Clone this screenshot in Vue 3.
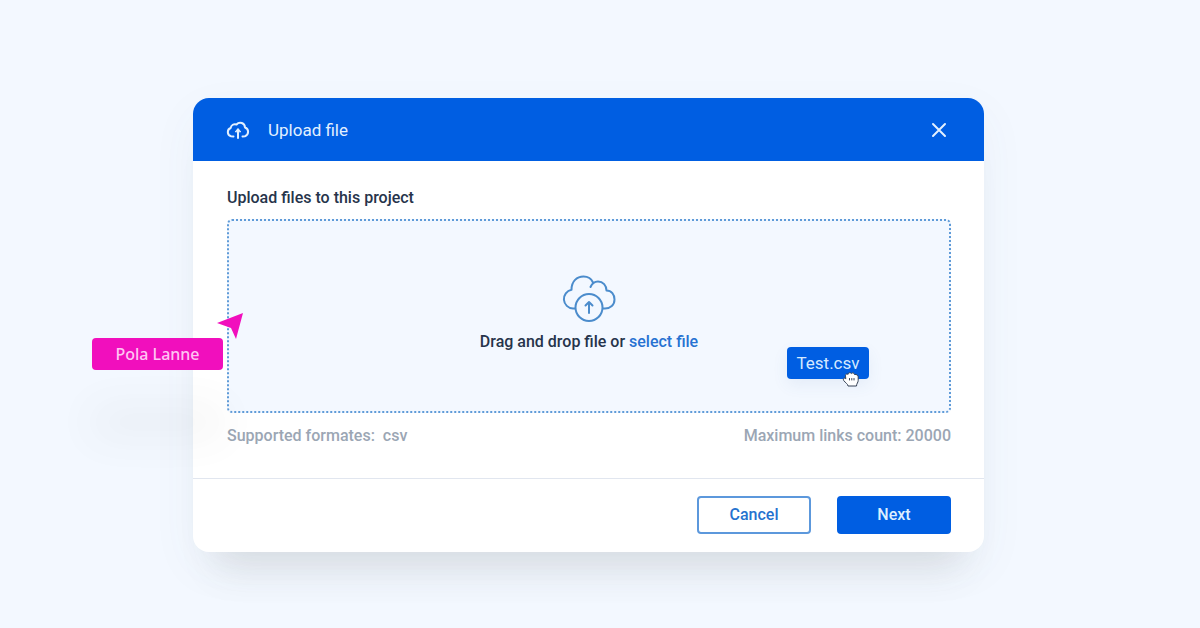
<script setup>
import { ref } from 'vue'

const fileInput = ref(null)
const openPicker = () => fileInput.value?.click()
</script>

<template>
  <main class="page">
    <section class="modal" role="dialog" aria-labelledby="modal-title">
      <header class="modal-header">
        <svg class="header-icon" viewBox="0 0 24 18" aria-hidden="true">
          <path d="M7.500 15.500L5 15.200A4.300 4.300 0 0 1 4.700 7C5 4 8 2.500 10.500 3.500C13.500 0 18.800 2 19 6.500A4.600 4.600 0 0 1 19 15.200L16.500 15.500" />
          <path d="M12 17V9" />
          <path class="arrow-head" d="M9.500 10.500L12 7.500L14.500 10.500Z" />
        </svg>
        <h1 id="modal-title">Upload file</h1>
        <button class="close" type="button" aria-label="Close">
          <svg viewBox="0 0 16 16" aria-hidden="true"><path d="M2 2L14 14M14 2L2 14" /></svg>
        </button>
      </header>

      <div class="modal-body">
        <h2>Upload files to this project</h2>
        <div class="dropzone">
          <svg class="cloud" viewBox="0 0 54 48" aria-hidden="true">
            <path d="M13 33.500H11A9.500 9.500 0 0 1 9.500 14.700C9.500 6 15 1.500 21.500 1.500C26.500 1.500 29.500 4 31 7.500" />
            <path d="M28.500 12C30 8.500 33 6.500 36 6.500C41 6.500 44.500 10.500 44.500 15.500C49.500 15.500 52.500 19.500 52.500 24.500C52.500 30 48.500 33.500 43 33.500H41" />
            <circle cx="27" cy="32.500" r="13.500" />
            <path d="M27 38V27M23.500 30.500L27 27L30.500 30.500" />
          </svg>
          <p>Drag and drop file or <a href="#" @click.prevent="openPicker">select file</a></p>
          <input ref="fileInput" type="file" accept=".csv" aria-label="Select file" hidden />
          <div class="dragged-file">
            Test.csv
            <svg class="hand" viewBox="0 0 18 17" aria-hidden="true">
              <path d="M3.500 5.500C3 3 5 2.500 6 3.500C6 1.500 8.500 1.200 9.300 2.500C10.300 1.300 12.200 1.800 12.500 3.500C14.500 3 16.500 4.500 16.200 6V9.500C16.200 11.500 14.500 12.500 14.500 15H6C6 13 3.500 12 1.700 9.500C0.700 7.500 2 6.500 3.500 7.500Z" />
              <path class="knuckles" d="M7.500 7.500V9M9.800 7.500V9M12 7.500V9" />
            </svg>
          </div>
        </div>
        <div class="hints">
          <span>Supported formates:&nbsp; csv</span>
          <span>Maximum links count: 20000</span>
        </div>
      </div>

      <footer class="modal-footer">
        <button class="btn outline" type="button">Cancel</button>
        <button class="btn" type="button">Next</button>
      </footer>

      <div class="collaborator">
        <span>Pola Lanne</span>
        <svg viewBox="0 0 28 28" aria-hidden="true"><path d="M27 1L20 27L15 16L1 11Z" /></svg>
      </div>
    </section>
  </main>
</template>

<style>
body {
  background: #f3f8ff;
}
</style>

<style scoped>
.page {
  box-sizing: border-box;
  min-height: 100vh;
  padding: 98px 216px 76px 193px;
  background: #f3f8ff;
  color: #26344b;
  font: 500 16px/20px Roboto, "Liberation Sans", sans-serif;
}

.modal {
  position: relative;
  border-radius: 16px;
  background: #fff;
  box-shadow:
    0 40px 36px -24px rgba(80, 80, 70, 0.13),
    0 16px 48px rgba(80, 90, 120, 0.05);
}

.modal-header {
  display: flex;
  align-items: center;
  height: 63px;
  padding: 0 37px 0 33px;
  border-radius: 16px 16px 0 0;
  background: #005ee2;
  color: #e2f0ff;
}

svg {
  display: block;
  fill: none;
  stroke: currentColor;
  stroke-linecap: round;
  stroke-linejoin: round;
}

.header-icon {
  width: 24px;
  height: 18px;
  margin-right: 18px;
  stroke-width: 2;
}

.arrow-head {
  fill: currentColor;
  stroke-width: 1;
}

h1,
h2,
p {
  margin: 0;
  font: inherit;
}

h1 {
  flex: 1;
  font-size: 17px;
  font-weight: 400;
}

.close {
  padding: 0;
  border: 0;
  background: none;
  color: inherit;
  cursor: pointer;
}

.close svg {
  width: 16px;
  height: 16px;
  stroke-width: 2;
}

.modal-body {
  padding: 27px 33px 32px 34px;
}

.dropzone {
  position: relative;
  display: flex;
  flex-direction: column;
  align-items: center;
  margin-top: 11px;
  padding: 54px 0 59px;
  border: 2px dotted #5f9bd8;
  border-radius: 5px;
  background: #f3f8ff;
}

.cloud {
  width: 54px;
  height: 48px;
  margin-bottom: 9px;
  color: #4b8ccc;
  stroke-width: 2;
}

a {
  color: #2672d2;
  text-decoration: none;
}

.dragged-file {
  position: absolute;
  right: 80px;
  bottom: 32px;
  box-sizing: border-box;
  width: 82px;
  padding: 6px 0;
  border-radius: 4px;
  background: #005ee2;
  box-shadow: 0 6px 16px rgba(70, 100, 160, 0.08);
  color: #d5e9ff;
  font-size: 17px;
  font-weight: 400;
  text-align: center;
}

.hand {
  position: absolute;
  right: 9px;
  bottom: -9px;
  width: 18px;
  height: 17px;
  color: #344154;
}

.hand path {
  fill: #fff;
}

.hints {
  display: flex;
  justify-content: space-between;
  margin-top: 13px;
  color: #9ba6b4;
}

.modal-footer {
  display: flex;
  justify-content: flex-end;
  gap: 26px;
  padding: 17px 33px 18px 34px;
  border-top: 1px solid #e1e6ef;
}

.btn {
  width: 114px;
  height: 38px;
  padding: 0;
  border: 2px solid #005ee2;
  border-radius: 4px;
  background: #005ee2;
  color: #dceeff;
  font: inherit;
  cursor: pointer;
}

.outline {
  border-color: #5c98dc;
  background: #fff;
  color: #2672cf;
}

.collaborator {
  position: absolute;
  top: 214px;
  left: -101px;
  padding-top: 26px;
  color: #ffc5f3;
  font: 500 16px/20px "Noto Sans", sans-serif;
}

.collaborator span {
  display: block;
  box-sizing: border-box;
  width: 131px;
  padding: 6px 0;
  border-radius: 4px;
  background: #f10fbd;
  box-shadow: 0 68px 40px rgba(80, 90, 90, 0.06);
  text-align: center;
}

.collaborator svg {
  position: absolute;
  top: 0;
  right: -21px;
  width: 28px;
  height: 28px;
  stroke: none;
  fill: #f10fbd;
}
</style>
